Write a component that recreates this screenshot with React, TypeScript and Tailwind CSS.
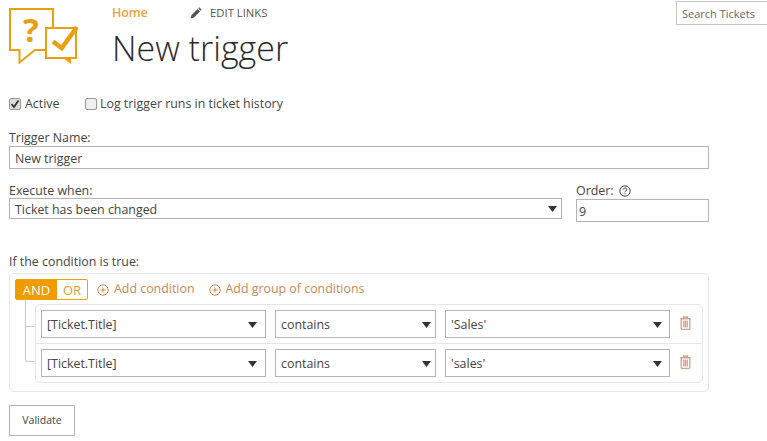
import React from "react";

const Arrow = () => (
  <svg width="9" height="6" viewBox="0 0 9 6" className="mt-[1px]"><path d="M0 0h9L4.5 6z" fill="#333" /></svg>
);

const Sel = ({ text, w, h = "h-[28px]", pr = "pr-[7px]" }: { text: string; w: string; h?: string; pr?: string }) => (
  <div className={`${w} ${h} ${pr} shrink-0 border border-[#b4b4b4] flex items-center justify-between pl-[5px] text-[#444]`}>
    <span className="pt-[3px]">{text}</span>
    <Arrow />
  </div>
);

const Plus = () => (
  <svg width="12" height="12" viewBox="0 0 12 12" fill="none" stroke="#c98a52" strokeWidth="1">
    <circle cx="6" cy="6" r="5.2" />
    <path d="M3.5 6h5M6 3.5v5" />
  </svg>
);

const Trash = () => (
  <svg width="11" height="14" viewBox="0 0 11 14" fill="none" stroke="#d3a08a" strokeWidth="1.3" className="ml-[1px] mb-[3px]">
    <path d="M0.2 2.6h10.6M3.5 2.6V1h4v1.6" />
    <rect x="1.2" y="2.6" width="8.6" height="10.8" rx="1" />
    <path d="M3.8 4.5v7M5.5 4.5v7M7.2 4.5v7" />
  </svg>
);

const Row = ({ value, first }: { value: string; first?: boolean }) => (
  <div className={`flex items-center pl-[5px] gap-[9px] ${first ? "h-[39px] border-b border-[#e6e6e6]" : "h-[38px]"}`}>
    <Sel text="[Ticket.Title]" w="w-[225px]" pr="pr-[8px]" />
    <Sel text="contains" w="w-[161px]" pr="pr-[4px]" />
    <Sel text={value} w="w-[225px]" />
    <Trash />
  </div>
);

export default function App() {
  return (
    <div className="relative w-[767px] h-[441px] overflow-hidden bg-white text-[#444] text-[12.4px] font-['Open_Sans','Noto_Sans',sans-serif]">
      <div className="flex h-[90px]">
        <div className="w-[103px] ml-[9px] shrink-0 pt-[8px]">
          <svg width="69" height="57" viewBox="0 0 69 57" fill="none">
            <path d="M44 19V1H1v41h9.5v12.5L26 42h10" stroke="#e8a010" strokeWidth="2" />
            <path d="M37 20h30v30H37z" stroke="#e8a010" strokeWidth="2" />
            <path d="M54 50h8v6z" fill="#e8a010" />
            <path d="M44 33.5l8.7 6.5L68 19" stroke="#e8a010" strokeWidth="4.5" />
            <text x="14" y="34" fontSize="33" fontWeight="700" fill="#e8a010" fontFamily="'Open Sans',sans-serif">?</text>
          </svg>
        </div>
        <div className="flex-1">
          <div className="flex items-center h-[26px]">
            <span className="text-[#e8a33d] text-[12.4px] font-semibold w-[78px]">Home</span>
            <svg width="12" height="12" viewBox="0 0 12 12" className="mr-[8px]">
              <path d="M0.5 11.5l1-3.5 6-6 2.5 2.5-6 6zM8.3 1.2l1-.9 2.4 2.4-1 1z" fill="#555" />
            </svg>
            <span className="text-[11.3px] text-[#555]">EDIT LINKS</span>
          </div>
          <div className="text-[34px] font-light leading-[42px] text-[#2a2a2a] mt-[1px]">New trigger</div>
        </div>
        <div className="w-[91px] h-[24px] mt-[1px] border border-[#c6c6c6] border-r-0 pl-[5px] text-[11px] leading-[24px] text-[#666]">Search Tickets</div>
      </div>

      <div className="pl-[9px] w-[709px] box-content">
        <div className="flex items-center h-[22px] mt-[3px]">
          <span className="w-[12px] h-[12px] rounded-[2px] border border-[#999] bg-[#ddd] flex items-center justify-center">
            <svg width="10" height="10" viewBox="0 0 10 10" fill="none" stroke="#333" strokeWidth="1.8"><path d="M1.5 5l2.5 3 4.5-6.5" /></svg>
          </span>
          <span className="ml-[4px] w-[60px]">Active</span>
          <span className="w-[12px] h-[12px] rounded-[2px] border border-[#999] bg-[#f0f0f0]" />
          <span className="ml-[3px]">Log trigger runs in ticket history</span>
        </div>

        <div className="leading-[16px] mt-[15px]">Trigger Name:</div>
        <div className="w-[700px] h-[23px] border border-[#b4b4b4] pl-[5px] leading-[23px]">New trigger</div>

        <div className="flex mt-[12px]">
          <div>
            <div className="leading-[15px] pt-[2px]">Execute when:</div>
            <Sel text="Ticket has been changed" w="w-[553px]" h="h-[21px]" pr="pr-[4px]" />
          </div>
          <div className="ml-[14px]">
            <div className="flex items-center gap-[5px] leading-[15px] pt-[2px]">
              Order:
              <svg width="12" height="12" viewBox="0 0 12 12" fill="none" stroke="#444" strokeWidth="1">
                <circle cx="6" cy="6" r="5.2" />
                <path d="M4.3 4.7c0-2.2 3.4-2.2 3.4 0 0 1.3-1.7 1.2-1.7 2.6M6 8.2v1.1" />
              </svg>
            </div>
            <div className="w-[133px] h-[23px] mt-[1px] border border-[#b4b4b4] pl-[2px] leading-[23px]">9</div>
          </div>
        </div>

        <div className="mt-[31px] leading-[17px]">If the condition is true:</div>

        <div className="relative w-[700px] h-[119px] mt-[3px] border border-[#e6e6e6] rounded-[5px] px-[5px] pt-[5px]">
          <div className="flex items-start">
            <div className="flex h-[21px] w-[73px] rounded-[2px] border border-[#eea200] text-[13px] leading-[20px]">
              <span className="w-[41px] bg-[#ee9c00] text-white text-center">AND</span>
              <span className="flex-1 text-[#dd9f30] text-center">OR</span>
            </div>
            <div className="flex items-center gap-[5px] ml-[9px] h-[21px] text-[#c98a52]"><Plus />Add condition</div>
            <div className="flex items-center gap-[5px] ml-[14px] h-[21px] text-[#c98a52]"><Plus />Add group of conditions</div>
          </div>
          <div className="absolute left-[15px] top-[26px] w-[10px] h-[62px] border-l border-b border-[#c9c9c9] rounded-bl-[3px]" />
          <div className="absolute left-[15px] top-[52px] w-[10px] border-b border-[#c9c9c9]" />
          <div className="ml-[20px] mt-[4px] w-[668px] h-[79px] border border-[#e6e6e6] rounded-[5px]">
            <Row value="'Sales'" first />
            <Row value="'sales'" />
          </div>
        </div>

        <div className="mt-[13px] w-[66px] h-[31px] border border-[#b4b4b4] text-[10.5px] pt-[1px] flex items-center justify-center">Validate</div>
      </div>
    </div>
  );
}
